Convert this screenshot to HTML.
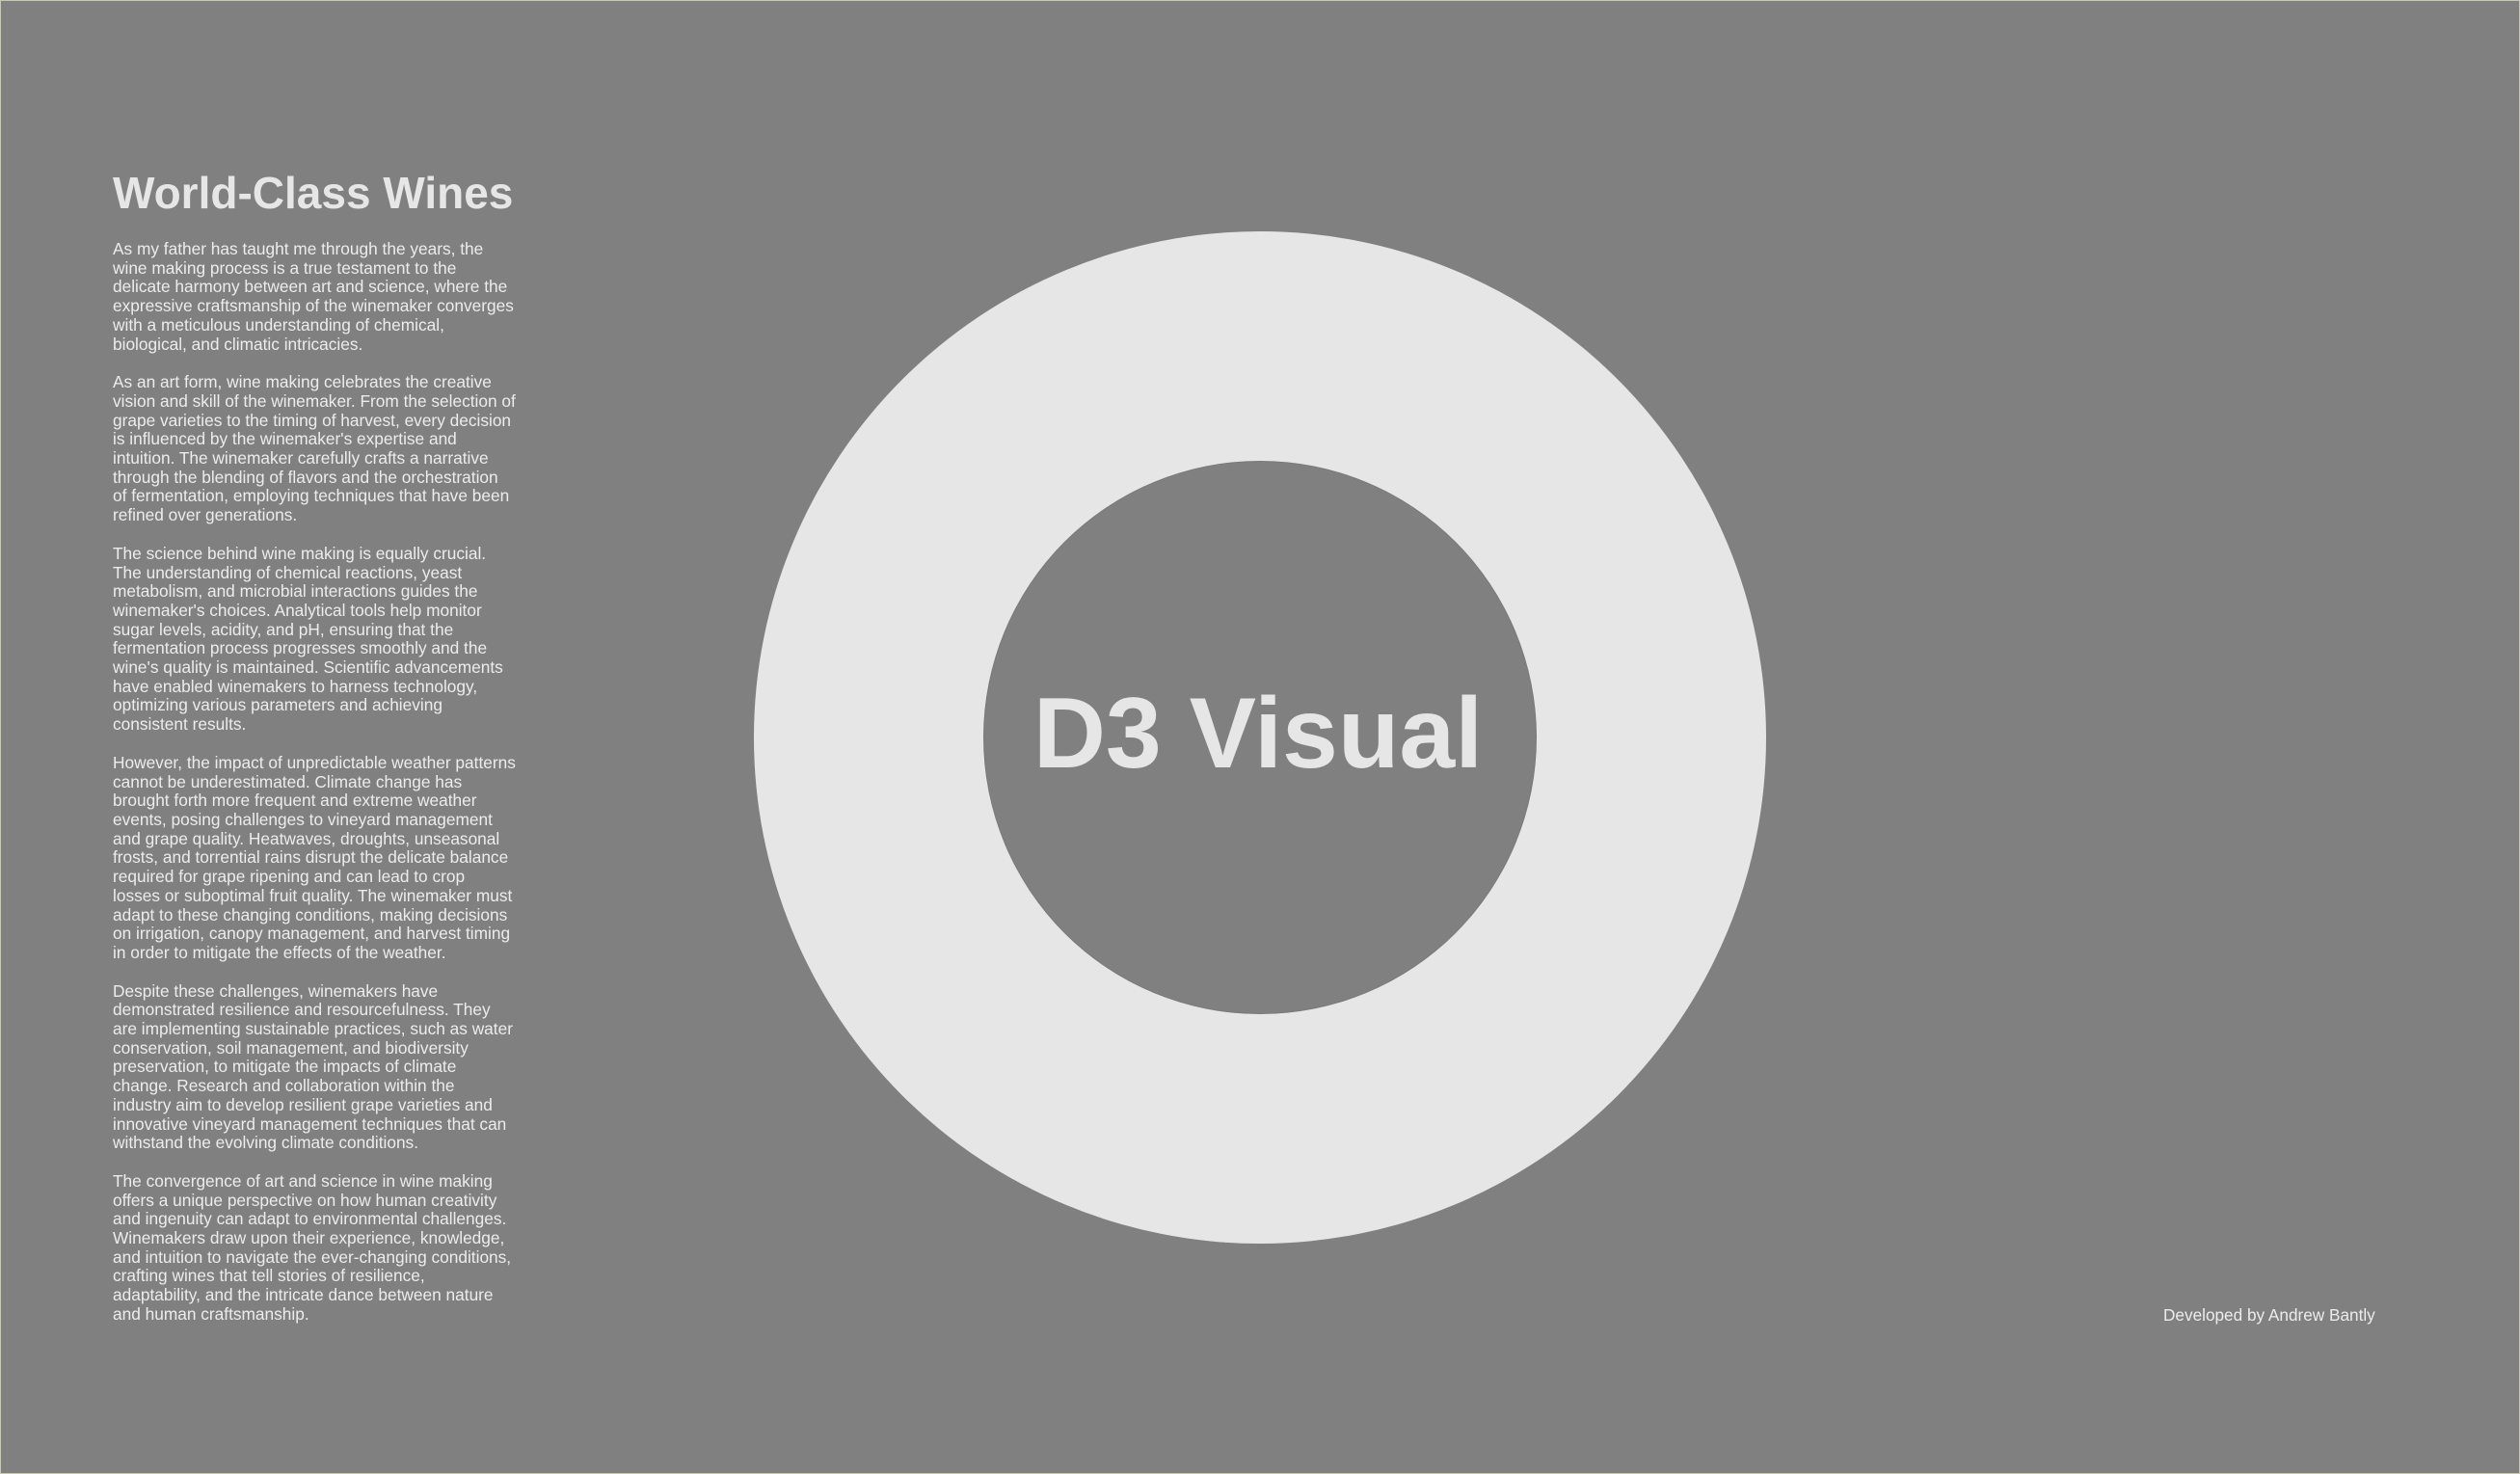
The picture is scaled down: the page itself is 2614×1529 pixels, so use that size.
<!DOCTYPE html>
<html><head><meta charset="utf-8"><style>
html,body{margin:0;padding:0}
body{width:2614px;height:1529px;background:#808080;position:relative;overflow:hidden;font-family:"Liberation Sans",Arial,sans-serif;color:#e6e6e6}
.frame{position:absolute;left:0;top:0;width:2612px;height:1527px;border:1px solid #c9c9b0}
h1{position:absolute;left:117px;top:172px;margin:0;font-size:46px;font-weight:bold;line-height:56px;width:600px}
.txt{position:absolute;left:117px;top:249px;width:418.5px;font-size:17.3px;line-height:19.7px;color:#ececec}
.txt p{margin:0 0 20px 0}
.outer{position:absolute;left:782px;top:240px;width:1050px;height:1050px;border-radius:50%;background:#e6e6e6}
.inner{position:absolute;left:1021px;top:479px;width:572px;height:572px;border-radius:50%;background:#808080;box-shadow:0 0 0 1px #7a7a7a}
.d3{position:absolute;left:998px;top:691px;width:614px;text-align:center;font-size:104px;font-weight:bold;line-height:140px}
.foot{position:absolute;left:2244px;top:1354px;font-size:17.2px;line-height:20px;color:#ececec}
</style></head><body>
<div class="frame"></div>
<h1>World-Class Wines</h1>
<div class="txt">
<p>As my father has taught me through the years, the wine making process is a true testament to the delicate harmony between art and science, where the expressive craftsmanship of the winemaker converges with a meticulous understanding of chemical, biological, and climatic intricacies.</p>
<p>As an art form, wine making celebrates the creative vision and skill of the winemaker. From the selection of grape varieties to the timing of harvest, every decision is influenced by the winemaker's expertise and intuition. The winemaker carefully crafts a narrative through the blending of flavors and the orchestration of fermentation, employing techniques that have been refined over generations.</p>
<p>The science behind wine making is equally crucial. The understanding of chemical reactions, yeast metabolism, and microbial interactions guides the winemaker's choices. Analytical tools help monitor sugar levels, acidity, and pH, ensuring that the fermentation process progresses smoothly and the wine's quality is maintained. Scientific advancements have enabled winemakers to harness technology, optimizing various parameters and achieving consistent results.</p>
<p>However, the impact of unpredictable weather patterns cannot be underestimated. Climate change has brought forth more frequent and extreme weather events, posing challenges to vineyard management and grape quality. Heatwaves, droughts, unseasonal frosts, and torrential rains disrupt the delicate balance required for grape ripening and can lead to crop losses or suboptimal fruit quality. The winemaker must adapt to these changing conditions, making decisions on irrigation, canopy management, and harvest timing in order to mitigate the effects of the weather.</p>
<p>Despite these challenges, winemakers have demonstrated resilience and resourcefulness. They are implementing sustainable practices, such as water conservation, soil management, and biodiversity preservation, to mitigate the impacts of climate change. Research and collaboration within the industry aim to develop resilient grape varieties and innovative vineyard management techniques that can withstand the evolving climate conditions.</p>
<p>The convergence of art and science in wine making offers a unique perspective on how human creativity and ingenuity can adapt to environmental challenges. Winemakers draw upon their experience, knowledge, and intuition to navigate the ever-changing conditions, crafting wines that tell stories of resilience, adaptability, and the intricate dance between nature and human craftsmanship.</p>
</div>
<div class="outer"></div>
<div class="inner"></div>
<div class="d3">D3 Visual</div>
<div class="foot">Developed by Andrew Bantly</div>
</body></html>
